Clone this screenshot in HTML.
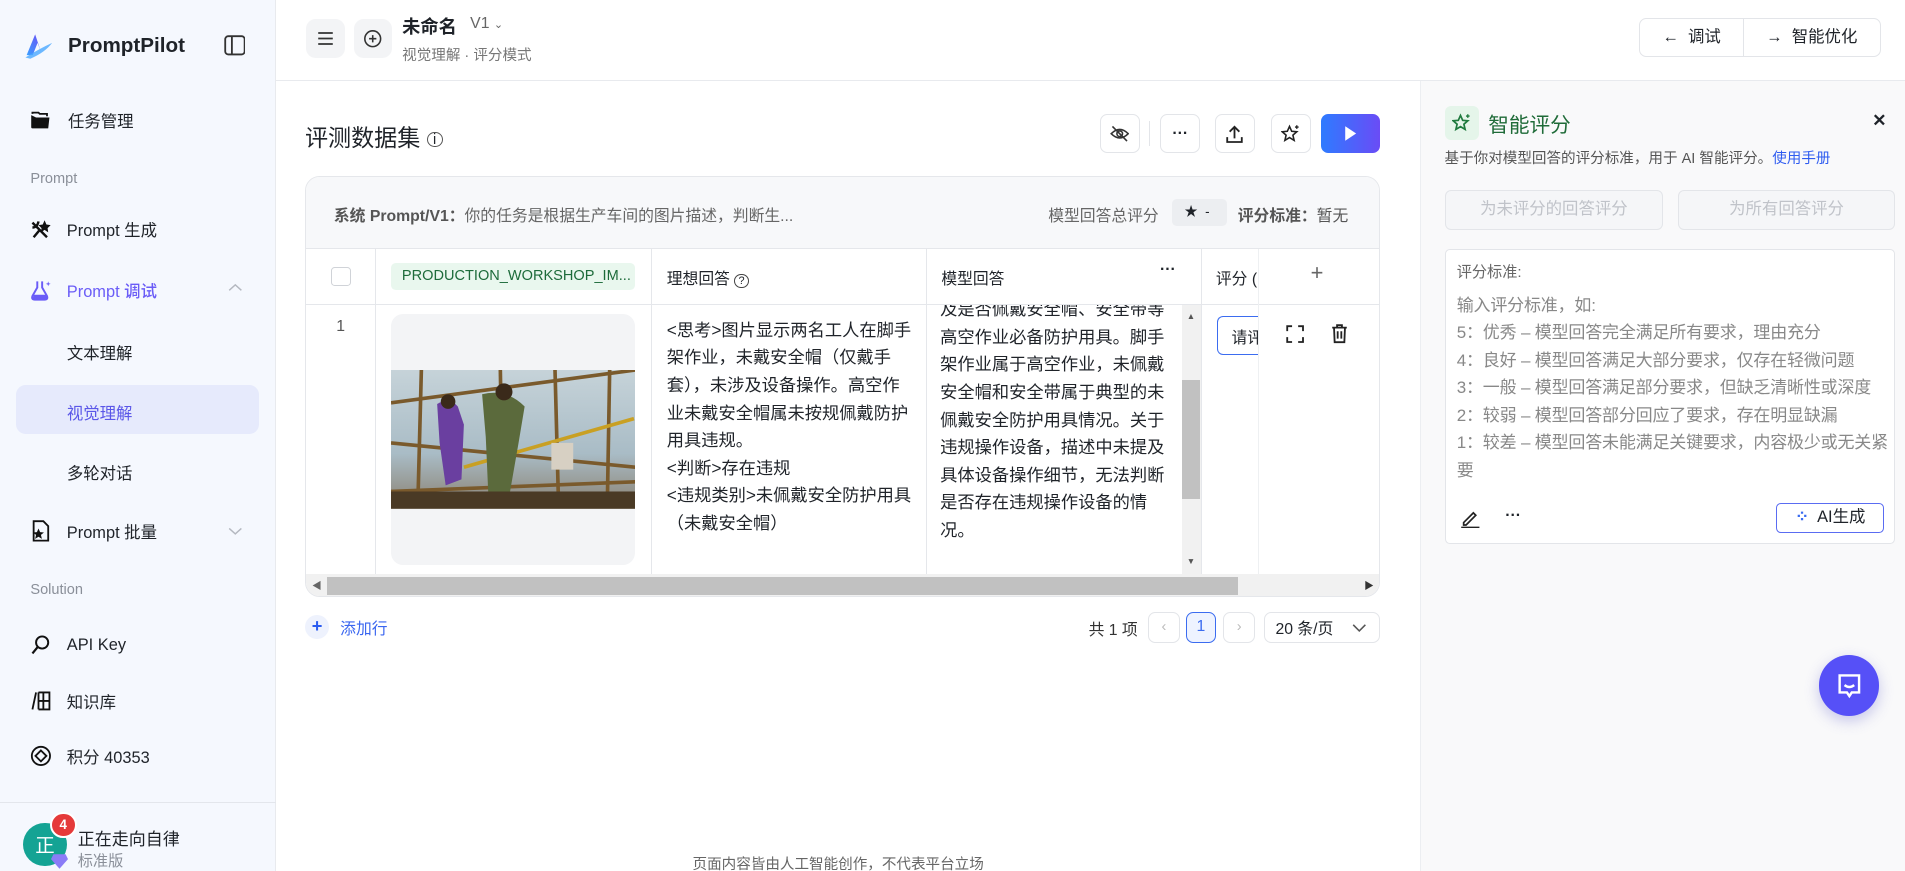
<!DOCTYPE html>
<html><head><meta charset="utf-8"><style>
*{box-sizing:border-box;margin:0;padding:0}
html,body{width:1905px;height:871px;overflow:hidden;background:#fff}
#r{zoom:1.21492;width:1568px;height:717px;position:relative;font-family:"Liberation Sans","Noto Sans CJK SC",sans-serif;color:#1f2329;font-size:13px}
.a{position:absolute}
.side{left:0;top:0;width:227px;height:717px;background:#f5f8fe;border-right:1px solid #e8eaee}
.mi{position:absolute;left:25px;font-size:13.5px;display:flex;align-items:center;gap:12px;color:#1f2329}
.mi svg{width:18px;height:18px}
.lbl{position:absolute;left:25px;font-size:12px;color:#8a8f99}
.btn{position:absolute;border:1px solid #e3e5e9;border-radius:6px;background:#fff;display:flex;align-items:center;justify-content:center}
.tx{font-size:14.2px;line-height:22.7px;color:#1f2329}
</style></head><body><div id="r">
<div class="a side">
 <svg class="a" style="left:19px;top:26px" width="26" height="24" viewBox="0 0 26 24"><defs><linearGradient id="lg" x1="0" y1="1" x2="1" y2="0"><stop offset="0" stop-color="#3aa0ff"/><stop offset="1" stop-color="#6b4cf6"/></linearGradient></defs><path d="M10 2 L3 19 L8 19 L12 9 L15 17 Z" fill="url(#lg)"/><path d="M2 21 Q13 14 24 9 Q18 17 6 22 Z" fill="#4aa8ff" opacity=".8"/></svg>
 <div class="a" style="left:56px;top:28px;font-size:17px;font-weight:bold">PromptPilot</div>
 <svg class="a" style="left:184px;top:29px" width="18" height="17" viewBox="0 0 18 17"><rect x="1" y="1" width="16" height="15" rx="2.5" fill="none" stroke="#333" stroke-width="1.5"/><line x1="6.5" y1="1" x2="6.5" y2="16" stroke="#333" stroke-width="1.5"/></svg>
 <div class="mi" style="top:89px"><svg viewBox="0 0 18 18"><path d="M1 5 L1 15 Q1 16 2 16 L15 16 L16 7 L5 7 Z" fill="#111"/><path d="M2 4 L2 3 L7 3 L8 4 L14 4 L14 6" fill="none" stroke="#111" stroke-width="1.5"/></svg><span style="margin-left:1px">任务管理</span></div>
 <div class="lbl" style="top:141px">Prompt</div>
 <div class="mi" style="top:179px"><svg viewBox="0 0 18 18"><path d="M2 3 L14 15 M3 15 L8 9 M2 7 Q6 7 7 2" stroke="#111" stroke-width="2" fill="none"/><path d="M12 1 L13.5 4.5 L17 5 L14.5 7.5 L15 11 L12 9 L9 11 L9.5 7.5 L7 5 L10.5 4.5Z" fill="#111"/></svg><span>Prompt 生成</span></div>
 <div class="mi" style="top:229px;color:#6a5cf7;font-weight:500"><svg viewBox="0 0 18 18"><path d="M6 2 L6 7 L2 14 Q1 17 4 17 L12 17 Q15 17 14 14 L10 7 L10 2" fill="none" stroke="#6a5cf7" stroke-width="1.6"/><path d="M3 13 L13 13 L14 15 Q14 17 12 17 L4 17 Q2 17 2.5 15Z" fill="#6a5cf7"/><path d="M15 2 L15.5 3.5 L17 4 L15.5 4.5 L15 6 L14.5 4.5 L13 4 L14.5 3.5Z" fill="#6a5cf7"/></svg><span>Prompt 调试</span></div>
 <svg class="a" style="left:188px;top:233px" width="12" height="8" viewBox="0 0 12 8"><path d="M1 6 L6 1.5 L11 6" fill="none" stroke="#b4b8c0" stroke-width="1.2"/></svg>
 <div class="a" style="left:55px;top:280px;font-size:13.5px">文本理解</div>
 <div class="a" style="left:13px;top:317px;width:200px;height:40px;background:#e6eafc;border-radius:8px"></div>
 <div class="a" style="left:55px;top:329px;color:#5b57e8;font-size:13.5px">视觉理解</div>
 <div class="a" style="left:55px;top:379px;font-size:13.5px">多轮对话</div>
 <div class="mi" style="top:427px"><svg viewBox="0 0 18 18"><path d="M3 1 L11 1 L15 5 L15 17 L3 17 Z" fill="none" stroke="#111" stroke-width="1.5"/><path d="M7 7 L8.3 10 L11.5 10.3 L9 12.3 L9.8 15.5 L7 13.8 L4.2 15.5 L5 12.3 L2.5 10.3 L5.7 10 Z" fill="#111"/></svg><span>Prompt 批量</span></div>
 <svg class="a" style="left:188px;top:433px" width="12" height="8" viewBox="0 0 12 8"><path d="M1 2 L6 6.5 L11 2" fill="none" stroke="#b4b8c0" stroke-width="1.2"/></svg>
 <div class="lbl" style="top:479px;height:13px;overflow:hidden">Solution</div>
 <div class="mi" style="top:522px"><svg viewBox="0 0 18 18"><circle cx="10" cy="7" r="5" fill="none" stroke="#111" stroke-width="1.6"/><path d="M6.5 10.5 L2 16" stroke="#111" stroke-width="1.8"/></svg><span>API Key</span></div>
 <div class="mi" style="top:567px"><svg viewBox="0 0 18 18"><path d="M5 2 L2 16 M7 2 L7 16 M7 2 L16 2 L16 16 L7 16 M11 2 L11 16 M7 9 L16 9" fill="none" stroke="#111" stroke-width="1.5"/></svg><span>知识库</span></div>
 <div class="mi" style="top:612px"><svg viewBox="0 0 18 18"><circle cx="9" cy="9" r="7.5" fill="none" stroke="#111" stroke-width="1.5"/><path d="M9 4.5 L13.5 9 L9 13.5 L4.5 9Z" fill="none" stroke="#111" stroke-width="1.5"/></svg><span>积分 40353</span></div>
 <div class="a" style="left:0;top:660px;width:227px;border-top:1px solid #e3e6ec"></div>
 <div class="a" style="left:19px;top:677px;width:36px;height:36px;border-radius:50%;background:#14a394;color:#fff;font-size:16px;text-align:center;line-height:38px">正</div>
 <div class="a" style="left:41px;top:668px;width:22px;height:22px;border-radius:50%;background:#e53a3a;border:2px solid #fff;color:#fff;font-size:11px;font-weight:bold;text-align:center;line-height:18px">4</div>
 <svg class="a" style="left:42px;top:702px" width="14" height="13" viewBox="0 0 14 13"><path d="M2 1 L12 1 L14 5 L7 13 L0 5Z" fill="#8b7cf7"/></svg>
 <div class="a" style="left:64px;top:679px;font-size:14px">正在走向自律</div>
 <div class="a" style="left:64px;top:699px;font-size:12.5px;color:#8a8f99">标准版</div>
</div>
<div class="a" style="left:227px;top:66px;width:1341px;border-top:1px solid #e8eaee"></div>
<div class="a" style="left:252px;top:16px;width:32px;height:32px;background:#f3f4f6;border-radius:8px"></div>
<svg class="a" style="left:261px;top:25px" width="14" height="14" viewBox="0 0 14 14"><path d="M1 2.5 H13 M1 7 H13 M1 11.5 H13" stroke="#333" stroke-width="1.4"/></svg>
<div class="a" style="left:291px;top:16px;width:32px;height:32px;background:#f3f4f6;border-radius:8px"></div>
<svg class="a" style="left:299px;top:24px" width="16" height="16" viewBox="0 0 16 16"><circle cx="8" cy="8" r="6.5" fill="none" stroke="#333" stroke-width="1.3"/><path d="M8 5 V11 M5 8 H11" stroke="#333" stroke-width="1.3"/></svg>
<div class="a" style="left:331px;top:11px;font-size:15px;font-weight:bold">未命名</div>
<div class="a" style="left:387px;top:12px;font-size:13px;color:#666">V1 <span style="font-size:9px">⌄</span></div>
<div class="a" style="left:331px;top:36px;font-size:12px;color:#777">视觉理解 · 评分模式</div>
<div class="btn" style="left:1349px;top:15px;width:199px;height:32px;justify-content:flex-start">
 <div style="width:86px;text-align:center;border-right:1px solid #e3e5e9;line-height:30px;font-size:13.5px">← &nbsp;调试</div>
 <div style="width:111px;text-align:center;line-height:30px;font-size:13.5px">→ &nbsp;智能优化</div>
</div>
<div class="a" style="left:251px;top:98px;font-size:19px">评测数据集 <span style="font-size:12px;display:inline-block;width:13px;height:13px;border:1px solid #555;border-radius:50%;text-align:center;line-height:12px;vertical-align:2px">i</span></div>
<div class="btn" style="left:905px;top:94px;width:33px;height:32px"><svg width="16" height="16" viewBox="0 0 16 16"><path d="M1 8 Q8 1 15 8 Q8 15 1 8Z" fill="none" stroke="#333" stroke-width="1.3"/><circle cx="8" cy="8" r="2.3" fill="none" stroke="#333" stroke-width="1.3"/><path d="M2 2 L14 14" stroke="#333" stroke-width="1.3"/></svg></div>
<div class="a" style="left:946px;top:100px;height:20px;border-left:1px solid #e3e5e9"></div>
<div class="btn" style="left:955px;top:94px;width:33px;height:32px;font-weight:bold">···</div>
<div class="btn" style="left:1000px;top:94px;width:33px;height:32px"><svg width="14" height="15" viewBox="0 0 14 15"><path d="M7 11 V2 M3 5.5 L7 1.5 L11 5.5 M1 10 V14 H13 V10" fill="none" stroke="#222" stroke-width="1.5"/></svg></div>
<div class="btn" style="left:1046px;top:94px;width:33px;height:32px"><svg width="16" height="16" viewBox="0 0 16 16"><path d="M7 2 L8.8 6 L13 6.4 L9.8 9.2 L10.8 13.5 L7 11.2 L3.2 13.5 L4.2 9.2 L1 6.4 L5.2 6 Z" fill="none" stroke="#222" stroke-width="1.3"/><path d="M13 1 V4 M11.5 2.5 H14.5" stroke="#222" stroke-width="1.1"/></svg></div>
<div class="a" style="left:1087px;top:94px;width:49px;height:32px;border-radius:6px;background:linear-gradient(90deg,#2e7bff,#6a4cf6)"><svg style="position:absolute;left:19px;top:9px" width="11" height="14" viewBox="0 0 11 14"><path d="M1 1 L10 7 L1 13Z" fill="#fff"/></svg></div>
<div class="a" style="left:251px;top:145px;width:885px;height:346px;border:1px solid #e5e7eb;border-radius:12px;overflow:hidden">
 <div class="a" style="left:0;top:0;width:885px;height:59px;background:#f7f8fa;border-bottom:1px solid #e5e7eb"></div>
 <div class="a" style="left:23px;top:21px;font-size:13px;color:#666"><b style="color:#555">系统 Prompt/V1：</b>你的任务是根据生产车间的图片描述，判断生...</div>
 <div class="a" style="left:611px;top:21px;color:#666">模型回答总评分</div>
 <div class="a" style="left:713px;top:18px;width:45px;height:22px;background:#eceef1;border-radius:4px;font-size:11px;line-height:22px;padding-left:10px">★ &nbsp;-</div>
 <div class="a" style="left:767px;top:21px;color:#555"><b>评分标准：</b>暂无</div>
 <div class="a" style="left:0;top:104px;width:885px;border-top:1px solid #e5e7eb"></div>
 <div class="a" style="left:57px;top:59px;height:268px;border-left:1px solid #e5e7eb"></div>
 <div class="a" style="left:284px;top:59px;height:268px;border-left:1px solid #e5e7eb"></div>
 <div class="a" style="left:510px;top:59px;height:268px;border-left:1px solid #e5e7eb"></div>
 <div class="a" style="left:737px;top:59px;height:268px;border-left:1px solid #e5e7eb"></div>
 <div class="a" style="left:784px;top:59px;height:268px;border-left:1px solid #eef0f2"></div>
 <div class="a" style="left:21px;top:74px;width:16px;height:16px;border:1px solid #d0d3d8;border-radius:3px;background:#fff"></div>
 <div class="a" style="left:70px;top:71px;width:201px;height:22px;background:#e9f7ee;border-radius:4px;color:#1d6b3a;font-size:12px;line-height:22px;padding-left:9px">PRODUCTION_WORKSHOP_IM...</div>
 <div class="a" style="left:297px;top:73px">理想回答 <span style="display:inline-block;width:12px;height:12px;border:1px solid #444;border-radius:50%;font-size:9px;text-align:center;line-height:11px">?</span></div>
 <div class="a" style="left:523px;top:73px">模型回答</div>
 <div class="a" style="left:703px;top:69px;font-weight:bold">···</div>
 <div class="a" style="left:749px;top:73px;width:35px;overflow:hidden;white-space:nowrap">评分 (</div>
 <div class="a" style="left:827px;top:68px;font-size:18px;color:#666">+</div>
 <div class="a" style="left:25px;top:116px;color:#555">1</div>
 <div class="a" style="left:70px;top:113px;width:201px;height:206px;background:#f3f4f6;border-radius:10px;overflow:hidden">
  <div class="a" style="left:0;top:46px;width:201px;height:114px;background:linear-gradient(180deg,#c6d3d9,#a9bcc6 60%,#8a8070)">
   <svg width="201" height="114" viewBox="0 0 201 114"><g stroke="#7a5a2c" stroke-width="3"><line x1="0" y1="27" x2="201" y2="0"/><line x1="0" y1="60" x2="201" y2="80"/><line x1="0" y1="100" x2="201" y2="92"/><line x1="25" y1="0" x2="22" y2="114"/><line x1="90" y1="0" x2="92" y2="114"/><line x1="135" y1="0" x2="138" y2="114"/><line x1="180" y1="0" x2="178" y2="114"/></g><line x1="60" y1="80" x2="200" y2="40" stroke="#c9a023" stroke-width="3"/><rect x="0" y="100" width="201" height="14" fill="#4a3a25"/><path d="M38 28 Q48 22 55 30 L60 45 L58 90 L45 95 L40 60Z" fill="#6a3fa0"/><circle cx="47" cy="26" r="6" fill="#3a2a1a"/><path d="M75 20 Q95 15 110 30 L105 60 L98 100 L80 100 L78 55Z" fill="#5b6a3c"/><circle cx="93" cy="18" r="7" fill="#3a2a1a"/><rect x="132" y="60" width="18" height="22" fill="#d7d0c3"/></svg>
  </div>
 </div>
 <div class="a tx" style="left:297px;top:115px;width:205px">&lt;思考&gt;图片显示两名工人在脚手架作业，未戴安全帽（仅戴手套），未涉及设备操作。高空作业未戴安全帽属未按规佩戴防护用具违规。<br>&lt;判断&gt;存在违规<br>&lt;违规类别&gt;未佩戴安全防护用具（未戴安全帽）</div>
 <div class="a" style="left:511px;top:105px;width:210px;height:222px;overflow:hidden"><div class="a tx" style="left:11px;top:-7px;width:192px">及是否佩戴安全帽、安全带等高空作业必备防护用具。脚手架作业属于高空作业，未佩戴安全帽和安全带属于典型的未佩戴安全防护用具情况。关于违规操作设备，描述中未提及具体设备操作细节，无法判断是否存在违规操作设备的情况。</div></div>
 <div class="a" style="left:721px;top:105px;width:16px;height:222px;background:#f1f1f1"></div>
 <div class="a" style="left:721px;top:167px;width:15px;height:98px;background:#c1c1c1"></div>
 <div class="a" style="left:725px;top:110px;font-size:7px;color:#555">▲</div>
 <div class="a" style="left:725px;top:312px;font-size:7px;color:#555">▼</div>
 <div class="a" style="left:750px;top:114px;width:34px;height:32px;border:1.5px solid #3b6cf0;border-right:none;border-radius:5px 0 0 5px;padding:7px 0 0 11px;overflow:hidden;white-space:nowrap">请评</div>
 <svg class="a" style="left:807px;top:122px" width="15" height="15" viewBox="0 0 15 15"><path d="M1 5 V1 H5 M10 1 H14 V5 M14 10 V14 H10 M5 14 H1 V10" fill="none" stroke="#222" stroke-width="1.5"/></svg>
 <svg class="a" style="left:844px;top:121px" width="14" height="16" viewBox="0 0 14 16"><path d="M1 3 H13 M5 3 V1 H9 V3 M2.5 3 L3 15 H11 L11.5 3 M5.5 6 V12 M8.5 6 V12" fill="none" stroke="#222" stroke-width="1.5"/></svg>
 <div class="a" style="left:0;top:327px;width:885px;height:18px;background:#f1f1f1"></div>
 <div class="a" style="left:17px;top:329px;width:750px;height:15px;background:#c1c1c1"></div>
 <div class="a" style="left:5px;top:330px;font-size:8px;color:#666">◀</div>
 <div class="a" style="left:871px;top:330px;font-size:8px;color:#333">▶</div>
</div>
<div class="a" style="left:251px;top:506px;width:20px;height:20px;border-radius:50%;background:#eef2fd;color:#2a5bf0;text-align:center;line-height:19px;font-weight:bold;font-size:15px">+</div>
<div class="a" style="left:280px;top:507px;color:#3a66f0">添加行</div>
<div class="a" style="left:896px;top:508px;color:#333">共 1 项</div>
<div class="btn" style="left:945px;top:504px;width:26px;height:25px;color:#bbb;font-size:12px">‹</div>
<div class="btn" style="left:976px;top:504px;width:25px;height:25px;border-color:#3b6cf0;background:#eef3ff;color:#3b6cf0">1</div>
<div class="btn" style="left:1007px;top:504px;width:26px;height:25px;color:#bbb;font-size:12px">›</div>
<div class="btn" style="left:1040px;top:504px;width:96px;height:25px;justify-content:space-between;padding:0 10px 0 9px">20 条/页<svg width="12" height="8" viewBox="0 0 12 8"><path d="M1 1.5 L6 6.5 L11 1.5" fill="none" stroke="#555" stroke-width="1.3"/></svg></div>
<div class="a" style="left:570px;top:702px;font-size:12px;color:#666">页面内容皆由人工智能创作，不代表平台立场</div>
<div class="a" style="left:1169px;top:67px;width:399px;height:650px;background:#f9f9fa;border-left:1px solid #eceef1"></div>
<div class="a" style="left:1189px;top:87px;width:28px;height:28px;background:#e5f5ea;border-radius:5px"><svg style="position:absolute;left:6px;top:6px" width="16" height="16" viewBox="0 0 16 16"><path d="M7 2 L8.8 6 L13 6.4 L9.8 9.2 L10.8 13.5 L7 11.2 L3.2 13.5 L4.2 9.2 L1 6.4 L5.2 6 Z" fill="none" stroke="#1f7a3e" stroke-width="1.4"/><path d="M13 1 V4 M11.5 2.5 H14.5" stroke="#1f7a3e" stroke-width="1.1"/></svg></div>
<div class="a" style="left:1225px;top:89px;font-size:17px;color:#1f6b38">智能评分</div>
<div class="a" style="left:1541px;top:91px;font-size:14px;font-weight:bold">✕</div>
<div class="a" style="left:1189px;top:121px;font-size:12px;color:#555">基于你对模型回答的评分标准，用于 AI 智能评分。<span style="color:#2f5cf0">使用手册</span></div>
<div class="a" style="left:1189px;top:156px;width:180px;height:33px;border:1px solid #e3e5e9;border-radius:5px;background:#f5f6f8;color:#c0c3c9;text-align:center;line-height:31px;font-size:13.5px">为未评分的回答评分</div>
<div class="a" style="left:1381px;top:156px;width:179px;height:33px;border:1px solid #e3e5e9;border-radius:5px;background:#f5f6f8;color:#c0c3c9;text-align:center;line-height:31px;font-size:13.5px">为所有回答评分</div>
<div class="a" style="left:1189px;top:205px;width:371px;height:243px;border:1px solid #e3e5e9;border-radius:4px;background:#fff"></div>
<div class="a" style="left:1199px;top:214px;font-size:12.5px;color:#666">评分标准:</div>
<div class="a" style="left:1199px;top:240px;font-size:14px;line-height:22.7px;color:#888;width:360px;letter-spacing:-0.15px">输入评分标准，如:<br>5：优秀 – 模型回答完全满足所有要求，理由充分<br>4：良好 – 模型回答满足大部分要求，仅存在轻微问题<br>3：一般 – 模型回答满足部分要求，但缺乏清晰性或深度<br>2：较弱 – 模型回答部分回应了要求，存在明显缺漏<br>1：较差 – 模型回答未能满足关键要求，内容极少或无关紧要</div>
<svg class="a" style="left:1202px;top:418px" width="17" height="17" viewBox="0 0 17 17"><path d="M3 12 L11 4 L13 6 L5 14 L3 14Z" fill="none" stroke="#222" stroke-width="1.4"/><path d="M1 16 H16" stroke="#222" stroke-width="1.4"/></svg>
<div class="a" style="left:1239px;top:417px;font-weight:bold">···</div>
<div class="a" style="left:1462px;top:414px;width:89px;height:25px;border:1px solid #5a6cf2;border-radius:4px;text-align:center;line-height:23px;font-size:13.5px"><span style="color:#3a6cf0;font-weight:bold">⁘</span>&nbsp; AI生成</div>
<div class="a" style="left:1497px;top:539px;width:50px;height:50px;border-radius:50%;background:#5650f7;box-shadow:0 4px 12px rgba(80,80,200,.3)"><svg style="position:absolute;left:14px;top:15px" width="22" height="22" viewBox="0 0 22 22"><path d="M3 2 H19 V16 H13 L11 19 L9 16 H3Z" fill="none" stroke="#fff" stroke-width="2"/><path d="M7 10 Q11 13 15 10" fill="none" stroke="#fff" stroke-width="2"/></svg></div>
</div></body></html>
